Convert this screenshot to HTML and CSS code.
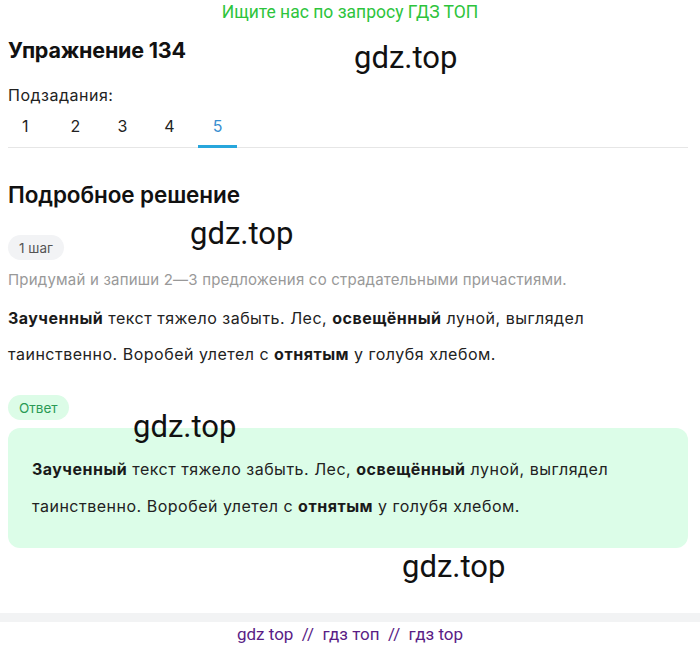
FILE: index.html
```html
<!DOCTYPE html>
<html lang="ru">
<head>
<meta charset="utf-8">
<link rel="stylesheet" href="styles.css">
</head>
<body>
<div class="page">
  <div class="banner">Ищите нас по запросу ГДЗ ТОП</div>
  <main class="content">
    <h1 class="title">Упражнение 134</h1>
    <div class="subtasks-label">Подзадания:</div>
    <nav class="tabs">
      <span class="tab">1</span>
      <span class="tab">2</span>
      <span class="tab">3</span>
      <span class="tab">4</span>
      <span class="tab active">5</span>
    </nav>
    <h2 class="section-title">Подробное решение</h2>
    <div class="pill pill-gray">1 шаг</div>
    <p class="task">Придумай и запиши 2—3 предложения со страдательными причастиями.</p>
    <p class="text"><b>Заученный</b> текст тяжело забыть. Лес, <b>освещённый</b> луной, выглядел таинственно. Воробей улетел с <b>отнятым</b> у голубя хлебом.</p>
    <div class="pill pill-green">Ответ</div>
    <div class="answer">
      <p class="text"><b>Заученный</b> текст тяжело забыть. Лес, <b>освещённый</b> луной, выглядел таинственно. Воробей улетел с <b>отнятым</b> у голубя хлебом.</p>
    </div>
  </main>
  <div class="footer-bar"></div>
  <footer class="footer">gdz top &nbsp;//&nbsp; гдз топ &nbsp;//&nbsp; гдз top</footer>
  <span class="wm wm1">gdz.top</span>
  <span class="wm wm2">gdz.top</span>
  <span class="wm wm3">gdz.top</span>
  <span class="wm wm4">gdz.top</span>
</div>
</body>
</html>
```
FILE: styles.css
```css
* { box-sizing: border-box; }
html, body { margin: 0; padding: 0; background: #fff; }
body { font-family: Inter, "Noto Sans", sans-serif; color: #1f2328; }
.page { position: relative; width: 700px; min-height: 650px; }
.banner {
  font-family: Roboto, sans-serif;
  font-size: 17.5px;
  color: #2dc43c;
  text-align: center;
  height: 24px;
  line-height: 24px;
}
.content { padding: 0 12px 0 8px; }
.title {
  margin: 12px 0 0;
  font-size: 21.5px;
  font-weight: 700;
  line-height: 28px;
  letter-spacing: -0.2px;
  color: #111;
}
.subtasks-label {
  margin-top: 20px;
  font-size: 16px;
  line-height: 22px;
  letter-spacing: 0.5px;
  color: #222;
}
.tabs {
  display: flex;
  margin-top: 9px;
  padding-left: 6px;
  border-bottom: 1px solid #e6e6e6;
}
.tab {
  width: 47px;
  text-align: center;
  font-size: 16px;
  line-height: 22px;
  padding-bottom: 8px;
  color: #222;
  border-bottom: 3px solid transparent;
  margin-bottom: -1px;
}
.tab:first-child { width: 38px; text-align: left; padding-left: 8px; }
.tab.active { color: #3a8fd0; border-bottom-color: #27a6dc; width: 39px; margin-left: 5px; }
.section-title {
  margin: 32px 0 0;
  font-size: 22.5px;
  font-weight: 600;
  line-height: 30px;
  letter-spacing: -0.1px;
  color: #111;
}
.pill {
  display: inline-flex;
  align-items: center;
  height: 25px;
  padding: 0 11px;
  border-radius: 13px;
  font-size: 13.5px;
}
.pill-gray { margin-top: 25px; background: #f2f3f5; color: #555; }
.pill-green { margin-top: 23px; background: #dcfce7; color: #2a9a55; }
.task {
  margin: 8px 0 0;
  font-size: 15px;
  line-height: 24px;
  letter-spacing: 0.2px;
  color: #999;
}
.text {
  margin: 8px 0 0;
  font-size: 16px;
  line-height: 36px;
  letter-spacing: 0.5px;
  color: #222;
  max-width: 620px;
}
.text b { font-weight: 700; color: #1a1a1a; }
.answer {
  margin-top: 8px;
  background: #dcfde8;
  border-radius: 12px;
  padding: 23px 24px 23px;
}
.answer .text { margin: 0; line-height: 37px; }
.footer-bar {
  margin-top: 65px;
  height: 9px;
  background: #f2f3f4;
}
.footer {
  text-align: center;
  font-family: Roboto, sans-serif;
  font-size: 17px;
  line-height: 24px;
  color: #5a1d86;
}
.wm {
  position: absolute;
  font-family: Roboto, sans-serif;
  font-size: 31px;
  color: #111;
  line-height: 1;
}
.wm1 { left: 354px; top: 42px; }
.wm2 { left: 190px; top: 218px; }
.wm3 { left: 133px; top: 411px; }
.wm4 { left: 402px; top: 551px; }
```
